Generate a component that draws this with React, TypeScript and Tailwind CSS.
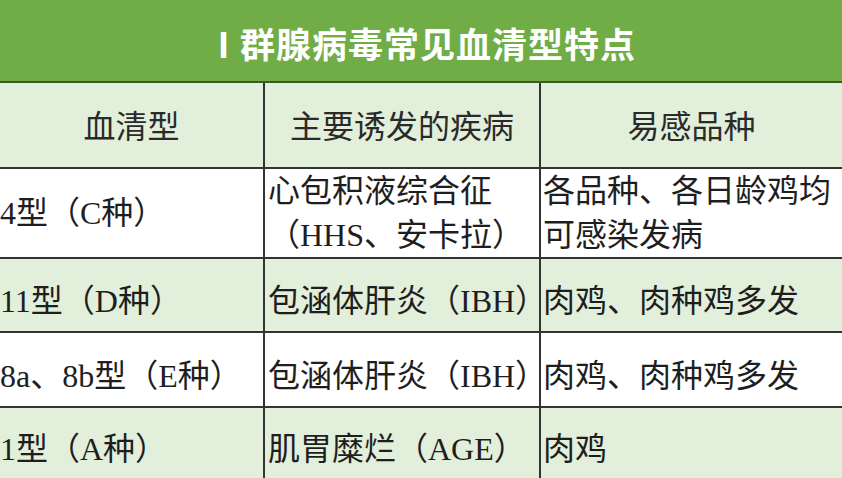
const cjk = "font-['Liberation_Serif','Noto_Sans_CJK_SC',serif]";

const rows = [
  {
    type: "4型（C种）",
    disease: ["心包积液综合征", "（HHS、安卡拉）"],
    hosts: ["各品种、各日龄鸡均", "可感染发病"],
    bg: "bg-white",
    h: "h-[90px]",
    pad: "pt-0",
  },
  {
    type: "11型（D种）",
    disease: ["包涵体肝炎（IBH）"],
    hosts: ["肉鸡、肉种鸡多发"],
    bg: "bg-[#e2efda]",
    h: "h-[74px]",
    pad: "pt-[12px]",
  },
  {
    type: "8a、8b型（E种）",
    disease: ["包涵体肝炎（IBH）"],
    hosts: ["肉鸡、肉种鸡多发"],
    bg: "bg-white",
    h: "h-[75px]",
    pad: "pt-[12px]",
  },
];

export default function App() {
  return (
    <main className={`w-[842px] h-[478px] overflow-hidden bg-white text-[#1e1e1e] ${cjk}`}>
      {/* title band */}
      <header className="h-[83px] bg-[#70ad47] flex items-center justify-center pt-[6px] border-b-2 border-[#3a5a26]">
        <h1 className="text-[35px] font-bold text-white tracking-[1px] font-['Noto_Sans_CJK_SC',sans-serif]">
          <span className="inline-block w-[34px] text-center">Ⅰ</span>群腺病毒常见血清型特点
        </h1>
      </header>

      {/* column heads */}
      <div className="grid grid-cols-[263px_276px_1fr] h-[84px] bg-[#e2efda] text-[32px] text-[#2a2a2a]">
        <div className="flex items-center justify-center pt-[4px]">血清型</div>
        <div className="flex items-center justify-center pt-[4px] border-l-2 border-[#333]">主要诱发的疾病</div>
        <div className="flex items-center justify-center pt-[4px] border-l-2 border-[#333]">易感品种</div>
      </div>

      {rows.map((r, i) => (
        <div
          key={i}
          className={`grid grid-cols-[263px_276px_1fr] ${r.h} ${r.bg} border-t-2 border-[#333] text-[32px]`}
        >
          <div className={`flex items-center whitespace-nowrap ${r.pad}`}>{r.type}</div>
          <div className={`flex flex-col justify-center leading-[44px] pl-[3px] whitespace-nowrap border-l-2 border-[#333] ${r.pad}`}>
            {r.disease.map((d) => (
              <span key={d}>{d}</span>
            ))}
          </div>
          <div className={`flex flex-col justify-center leading-[44px] pl-[2px] whitespace-nowrap border-l-2 border-[#333] ${r.pad}`}>
            {r.hosts.map((d) => (
              <span key={d}>{d}</span>
            ))}
          </div>
        </div>
      ))}

      <div className="grid grid-cols-[263px_276px_1fr] h-[72px] bg-[#e2efda] border-t-2 border-[#333] text-[32px]">
        <div className="flex items-center pt-[12px]">1型（A种）</div>
        <div className="flex items-center pl-[3px] pt-[12px] whitespace-nowrap border-l-2 border-[#333]">肌胃糜烂（AGE）</div>
        <div className="flex items-center pl-[2px] pt-[12px] border-l-2 border-[#333]">肉鸡</div>
      </div>
    </main>
  );
}
